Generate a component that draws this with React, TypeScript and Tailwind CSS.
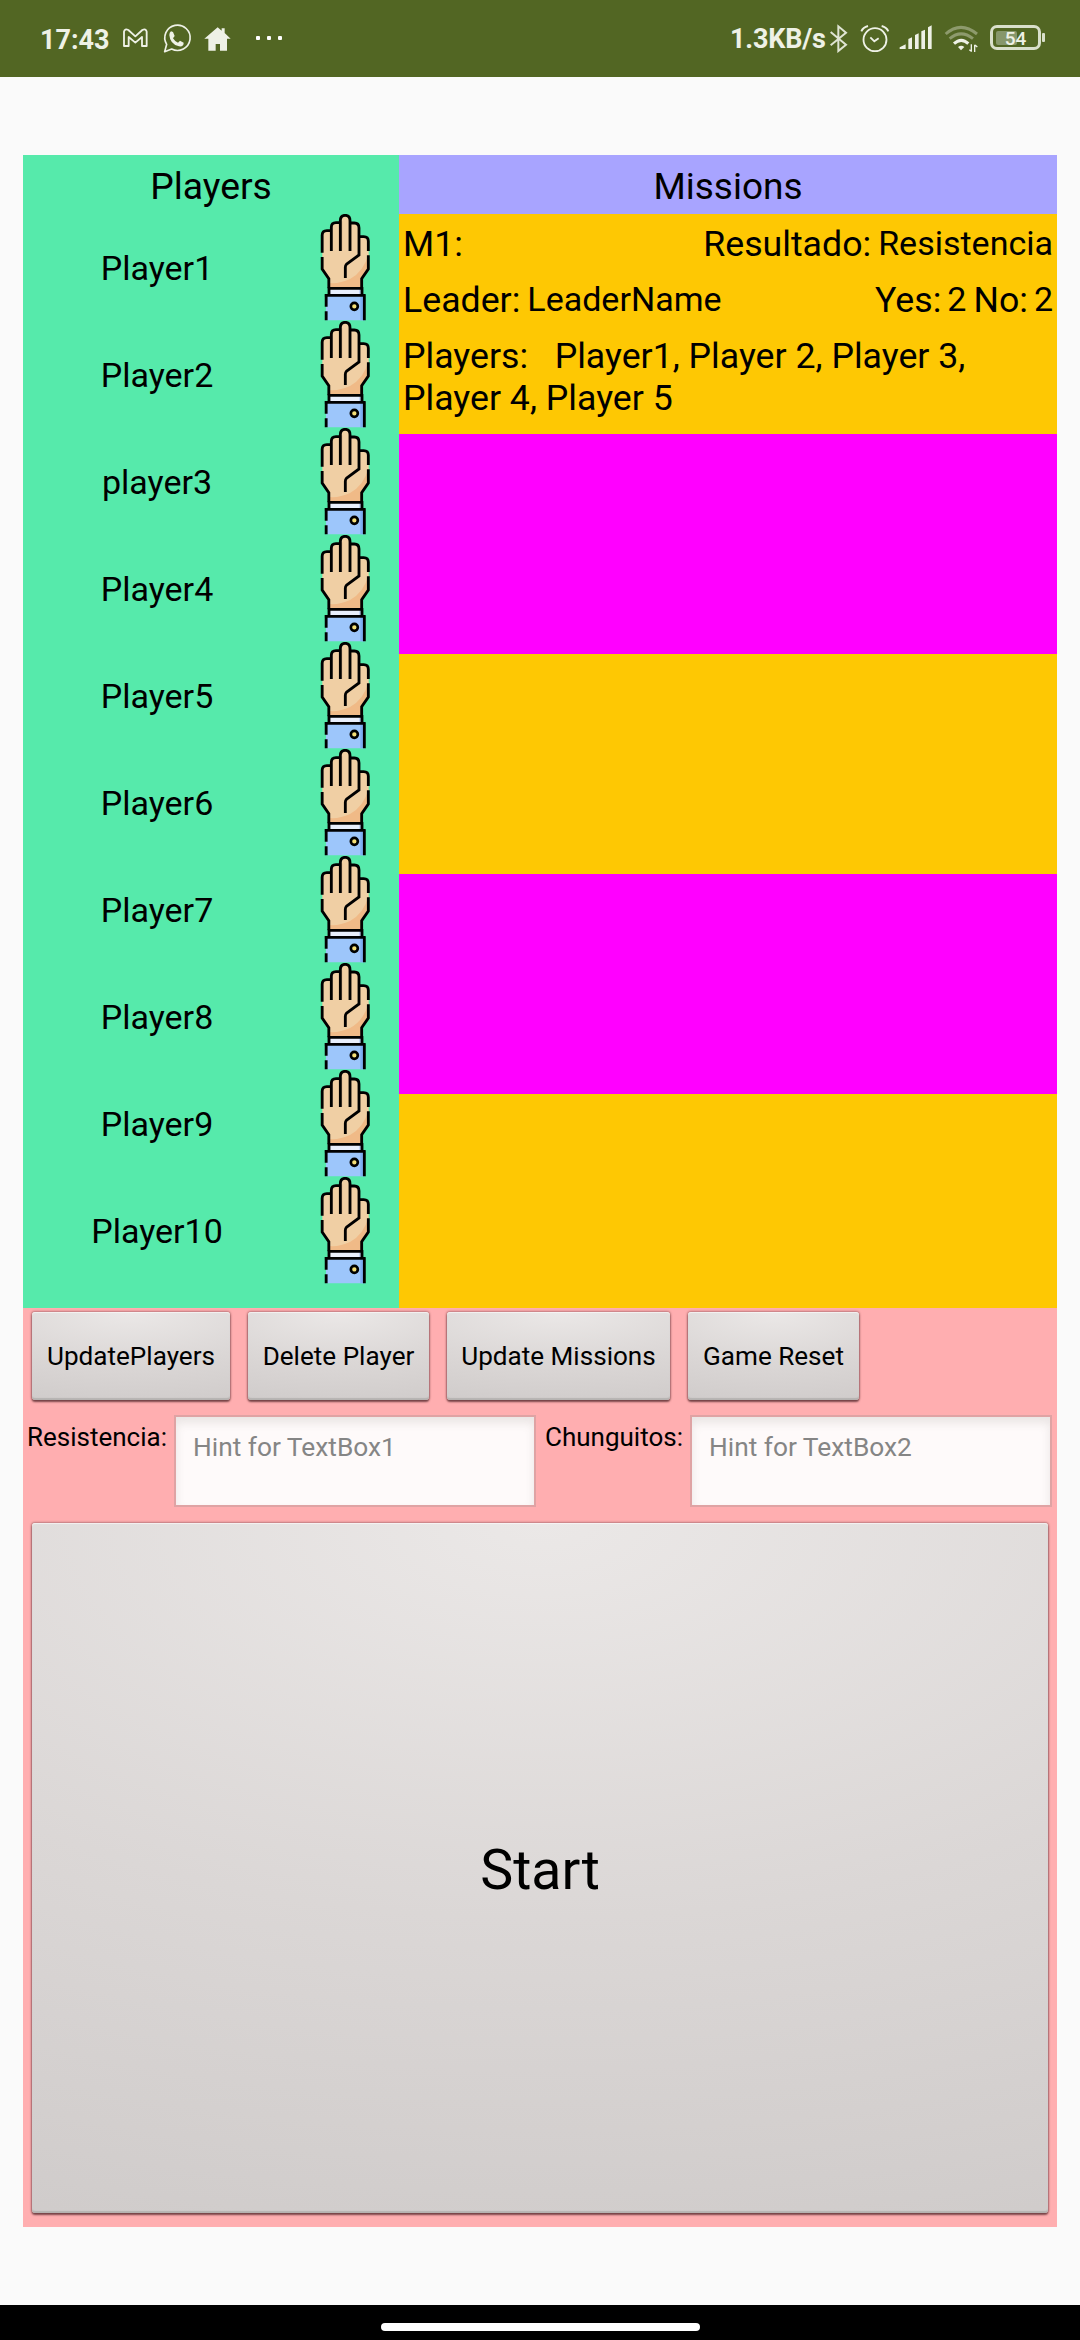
import React from "react";

const players = ["Player1", "Player2", "player3", "Player4", "Player5", "Player6", "Player7", "Player8", "Player9", "Player10"];

const ink = "#eef1e6";

function Hand() {
  return (
    <svg width="50" height="107" viewBox="61 42 150 321" className="block" fill="none">
      <path d="M68 154V102q0-10 14-10h12V80q2-13 14-13h12V60q3-14 16-14t16 14v10h12q14 0 16 12v28h10q14 2 17 12v88l-22 28v48H89v-44l-21-32z" fill="#f0cfa4" />
      <path d="M207 160v52l-22 26v26H89v-15q30 3 62-12q42-22 56-77z" fill="#f0ba87" />
      <path d="M120 64h8v88h-8zM149 66h6v86h-6z" fill="#d9b08b" />
      <path d="M89 266h98v20H89z" fill="#e9effc" />
      <path d="M178 266h9v20h-9z" fill="#c5d6f5" />
      <path d="M79 288h117v73H79z" fill="#9dc6fb" />
      <path d="M182 288h13v73h-13z" fill="#7eaef2" />
      <g stroke="#000" strokeWidth="8.500">
        <path d="M67.500 158V106q0-14 14-14h13" />
        <path d="M95 153V82q0-14 14-14h9" />
        <path d="M122 153V62q0-16 14.500-16T151 62v91" />
        <path d="M152 69h12q14 0 14 15v81l-37 27q-4 4-4 10v32" />
        <path d="M178 110h14q14 0 14 14v29" />
        <path d="M67.500 171v36l20 29v29" />
        <path d="M206 166v41l-20 29v29" />
        <path d="M84 265h107M88 265v20M187 265v20" />
        <path d="M75 286h122M79.500 283v37M79.500 334v27M194 283v78" />
      </g>
      <circle cx="164" cy="319" r="10.500" fill="#f5df76" stroke="#000" strokeWidth="8" />
    </svg>
  );
}

function Label({ children, className }: { children: React.ReactNode; className?: string }) {
  return <span className={`whitespace-pre ${className ?? ""}`}>{children}</span>;
}

const buttonSkin =
  "rounded-[3px] bg-[radial-gradient(ellipse_150%_110%_at_50%_0%,#ebe8e7_0%,#dbd7d6_52%,#cfcbca_100%)] shadow-[0_2px_2px_0_rgba(70,30,35,0.65),0_0_2px_1px_rgba(110,60,65,0.45),inset_0_1px_1px_rgba(255,255,255,0.6),inset_0_-2px_1px_rgba(120,120,115,0.3)]";

function ToolButton({ text, width }: { text: string; width: string }) {
  return (
    <button className={`h-[88px] text-[26.100px] leading-[30px] whitespace-nowrap ${width} ${buttonSkin}`}>{text}</button>
  );
}

function Field({ hint }: { hint: string }) {
  return (
    <div className="h-[92px] w-[362px] border-2 border-[#dfa3a4] bg-[#fefafa] px-[17px] pt-[15px] text-[26.300px] leading-[30px] text-[#858585] shadow-[inset_0_6px_10px_rgba(90,80,70,0.12)]">
      {hint}
    </div>
  );
}

function StatusBar() {
  return (
    <div className="flex h-[77px] items-start bg-[#526623] text-[#eef1e6]">
      <span className="ml-[40px] mt-[24px] w-[67px] text-[27px] font-bold leading-[32px] whitespace-nowrap">17:43</span>
      <svg className="ml-[15px] mt-[27px]" width="27" height="22" viewBox="366 81 81 66" fill="none" stroke={ink} strokeWidth="5.500" strokeLinejoin="round">
        <path d="M372 138V95q2-10 13-5l21 19 21-19q11-5 13 5v43h-14v-27l-20 17-20-17v27z" />
      </svg>
      <svg className="ml-[13px] mt-[23px]" width="30" height="31" viewBox="486 69 90 93" fill="none" stroke={ink} strokeWidth="5">
        <path d="M494 155l6-22A38 38 0 1 1 515 147z" strokeLinejoin="round" />
        <path d="M513 94l6 2 5 12-5 7q5 9 15 13l6-6 11 6q0 13-14 11-27-6-29-34 0-8 5-11z" fill={ink} stroke="none" />
      </svg>
      <svg className="ml-[12px] mt-[26px]" width="27" height="26" viewBox="613 78 81 78" fill={ink}>
        <path d="M614 116l40-34 12 10v-7h9v14l18 17h-11v36h-21v-20h-13v20h-22v-36z" />
      </svg>
      <svg className="ml-[24px] mt-[35px]" width="28" height="6" viewBox="0 0 28 6" fill="#fff">
        <rect x="1" y="1" width="4" height="4" rx="1" /><rect x="12" y="1" width="4" height="4" rx="1" /><rect x="23" y="1" width="4" height="4" rx="1" />
      </svg>
      <span className="ml-auto mt-[23px] w-[96px] text-[27px] font-bold leading-[32px] tracking-[-0.2px] whitespace-nowrap">1.3KB/s</span>
      <svg className="ml-[4px] mt-[24px]" width="18" height="29" viewBox="390 72 54 87" fill="none" stroke="#dfe4d3" strokeWidth="6">
        <path d="M392 96l46 38-23 19V79l23 19-46 38" />
      </svg>
      <svg className="ml-[12px] mt-[24px]" width="30" height="29" viewBox="480 72 90 87" fill="none" stroke={ink} strokeWidth="5.500">
        <circle cx="525" cy="119" r="34.500" />
        <path d="M511 112l12 12 13-9M484 94q5-12 20-16M565 94q-5-12-20-16" />
      </svg>
      <svg className="ml-[9px] mt-[24px]" width="34" height="27" viewBox="597 72 102 81" fill={ink}>
        <path d="M599 147v-5l18-9v14zM625 147v-30l11-5v35zM645 147v-42l11-5v47zM664 147V94l11-5v58zM684 147V82l11-6v71z" />
      </svg>
      <svg className="ml-[11px] mt-[24px]" width="36" height="29" viewBox="732 72 108 87" fill="none" strokeWidth="9">
        <path d="M737 102q45-40 94 0" stroke="#8d9a6c" /><path d="M749 116q34-29 70 0" stroke="#8d9a6c" />
        <path d="M762 131q22-20 43 0" stroke={ink} /><path d="M774 141q10-8 19 0l-10 10z" fill={ink} />
        <path d="M814 133v22M808 149l6 5M824 156v-22M832 141l-7-6" stroke={ink} strokeWidth="4" />
      </svg>
      <div className="relative ml-[10px] mr-[34px] mt-[25px] flex h-[25px] w-[56px] items-start">
        <div className="flex h-[25px] w-[51px] rounded-[7px] border-[3px] border-[#d9dfcb] p-[2.500px]">
          <div className="h-[14px] w-[21px] rounded-[2px] bg-[#87976b]" />
        </div>
        <div className="ml-[1px] mt-[8px] h-[9px] w-[3px] rounded-[1px] bg-[#d9dfcb]" />
        <span className="absolute left-0 top-[4px] w-[51px] text-center text-[19px] font-medium leading-[20px]">54</span>
      </div>
    </div>
  );
}

export default function App() {
  return (
    <div className="flex h-[2340px] w-[1080px] flex-col overflow-hidden bg-[#fafafa] font-[Roboto,sans-serif] text-black">
      <StatusBar />
      <main className="mx-[23px] mt-[78px] flex h-[2072px] flex-col bg-[#ffaeb0]">
        <section className="flex h-[1153px]">
          <div className="w-[376px] bg-[#56eaab]">
            <h1 className="h-[59px] pt-[9px] text-center text-[37.300px] leading-[45px]">Players</h1>
            {players.map((name) => (
              <div key={name} className="flex h-[107px] items-center">
                <span className="w-[268px] pt-[2px] text-center text-[34px] leading-[39px]">{name}</span>
                <div className="ml-[29px]"><Hand /></div>
              </div>
            ))}
          </div>
          <div className="flex w-[658px] flex-col overflow-hidden">
            <h1 className="h-[59px] shrink-0 bg-[#a8a4ff] pt-[9px] text-center text-[37px] leading-[45px]">Missions</h1>
            <div className="h-[220px] shrink-0 bg-[#fec803] pl-[4px] pr-[4px] pt-[9px] text-[35.700px] leading-[42px]">
              <div className="flex h-[56px]">
                <Label>M1:</Label>
                <Label className="ml-auto">Resultado:</Label>
                <Label className="ml-[7px] text-[34px] leading-[40px]">Resistencia</Label>
              </div>
              <div className="flex h-[56px]">
                <Label>Leader:</Label>
                <Label className="ml-[7px] text-[34px] leading-[40px]">LeaderName</Label>
                <Label className="ml-auto">Yes:</Label>
                <Label className="ml-[6px] text-[34px] leading-[40px]">2</Label>
                <Label className="ml-[7px]">No:</Label>
                <Label className="ml-[6px] text-[34px] leading-[40px]">2</Label>
              </div>
              <p className="whitespace-pre-wrap">{"Players:   Player1, Player 2, Player 3, Player 4, Player 5"}</p>
            </div>
            <div className="h-[220px] shrink-0 bg-[#ff00ff]" />
            <div className="h-[220px] shrink-0 bg-[#fec803]" />
            <div className="h-[220px] shrink-0 bg-[#ff00ff]" />
            <div className="h-[214px] shrink-0 bg-[#fec803]" />
          </div>
        </section>
        <section className="flex flex-1 flex-col">
          <div className="flex gap-[18px] pl-[9px] pt-[4px]">
            <ToolButton text="UpdatePlayers" width="w-[198px]" />
            <ToolButton text="Delete Player" width="w-[181px]" />
            <ToolButton text="Update Missions" width="w-[223px]" />
            <ToolButton text="Game Reset" width="w-[171px]" />
          </div>
          <div className="mt-[15px] flex pl-[4px] text-[26px] leading-[30px]">
            <Label className="w-[147px] pt-[7px]">Resistencia:</Label>
            <Field hint="Hint for TextBox1" />
            <Label className="ml-[9px] w-[145px] pt-[7px]">Chunguitos:</Label>
            <Field hint="Hint for TextBox2" />
          </div>
          <button className={`ml-[9px] mt-[16px] h-[690px] w-[1016px] pt-[5px] text-[55.500px] leading-[64px] ${buttonSkin}`}>Start</button>
        </section>
      </main>
      <div className="mt-auto flex h-[35px] justify-center bg-black pt-[18px]">
        <div className="h-[8px] w-[319px] rounded-full bg-white" />
      </div>
    </div>
  );
}
